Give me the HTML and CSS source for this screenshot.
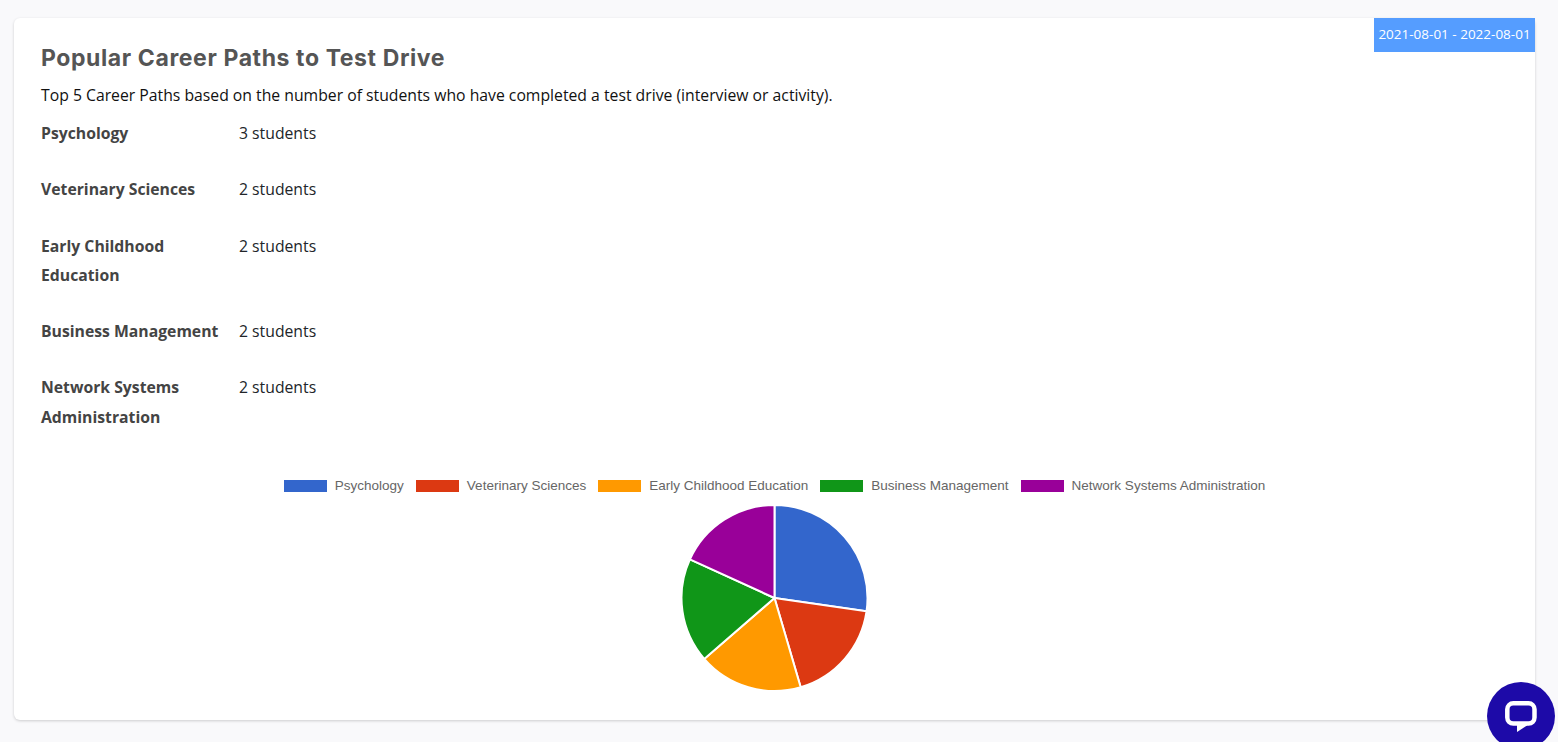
FILE: index.html
```html
<!DOCTYPE html>
<html lang="en">
  <head>
    <meta charset="UTF-8" />
    <title>Popular Career Paths</title>
    <link rel="stylesheet" href="styles.css">
  </head>
  <body>
    <main class="card">
      <div class="date-chip">2021-08-01 - 2022-08-01</div>
      <h2 class="card-title">Popular Career Paths to Test Drive</h2>
      <p class="card-desc">Top 5 Career Paths based on the number of students who have completed a test drive (interview or activity).</p>
      <div class="paths">
        <div class="path-name">Psychology</div>
        <div class="path-count">3 students</div>
        <div class="path-name">Veterinary Sciences</div>
        <div class="path-count">2 students</div>
        <div class="path-name">Early Childhood Education</div>
        <div class="path-count">2 students</div>
        <div class="path-name">Business Management</div>
        <div class="path-count">2 students</div>
        <div class="path-name">Network Systems Administration</div>
        <div class="path-count">2 students</div>
      </div>
      <div class="chart">
        <ul class="legend">
          <li class="legend-item"><span class="swatch blue"></span>Psychology</li>
          <li class="legend-item"><span class="swatch red"></span>Veterinary Sciences</li>
          <li class="legend-item"><span class="swatch orange"></span>Early Childhood Education</li>
          <li class="legend-item"><span class="swatch green"></span>Business Management</li>
          <li class="legend-item"><span class="swatch purple"></span>Network Systems Administration</li>
        </ul>
        <svg class="pie" width="190" height="190" viewBox="-94.5 -95 190 190">
          <path fill="#3366cc" d="M0 0L0 -93A93 93 0 0 1 92.06 13.23Z" />
          <path fill="#dc3912" d="M0 0L92.06 13.23A93 93 0 0 1 26.2 89.23Z" />
          <path fill="#ff9900" d="M0 0L26.2 89.23A93 93 0 0 1 -70.28 60.9Z" />
          <path fill="#109618" d="M0 0L-70.28 60.9A93 93 0 0 1 -84.6 -38.63Z" />
          <path fill="#990099" d="M0 0L-84.6 -38.63A93 93 0 0 1 0 -93Z" />
        </svg>
      </div>
    </main>
    <a class="chat-btn" href="#">
      <svg width="34" height="34" viewBox="0 0 34 34">
        <rect x="3.3" y="4.300" width="27.200" height="20.300" rx="6" fill="none" stroke="#fff" stroke-width="4.500" />
        <path fill="#fff" d="M13 25V33L23 26.500V25Z" />
      </svg>
    </a>
  </body>
</html>
```

FILE: styles.css
```css
* {
  margin: 0;
  padding: 0;
  box-sizing: border-box;
}

body {
  height: 742px;
  overflow: hidden;
  padding: 18px 23px 22px 14px;
  background-color: #f9f9fb;
  font-family: "Open Sans", sans-serif;
  font-size: 15.75px;
  color: #212529;
}

.card {
  position: relative;
  height: 702px;
  padding: 25px 27px 0;
  background-color: #fff;
  border-radius: 6px;
  box-shadow: 0 1px 3px rgba(0, 0, 0, 0.18);
}

.date-chip {
  position: absolute;
  top: 0;
  right: 0;
  width: 161px;
  height: 34px;
  background-color: #559dff;
  color: #fff;
  font-size: 13.5px;
  line-height: 32px;
  text-align: center;
}

.card-title {
  font-family: Inter, sans-serif;
  font-size: 23px;
  font-weight: 700;
  line-height: 30px;
  letter-spacing: 0.6px;
  color: #555;
}

.card-desc {
  margin-top: 10px;
  line-height: 24px;
  color: #111;
}

.paths {
  display: grid;
  grid-template-columns: 198px 1fr;
  row-gap: 27px;
  margin-top: 12px;
  line-height: 29.25px;
}

.path-name {
  padding-right: 16px;
  font-weight: 700;
  color: #444;
}

.chart {
  display: flex;
  flex-direction: column;
  align-items: center;
  margin-top: 45.75px;
}

.legend {
  display: flex;
  gap: 12px;
  list-style: none;
  font-family: "Liberation Sans", Arial, sans-serif;
  font-size: 13.5px;
  line-height: 16px;
  color: #666;
}

.legend-item {
  display: flex;
  align-items: center;
}

.swatch {
  width: 43px;
  height: 12px;
  margin-right: 8px;
}

.blue { background-color: #3366cc; }
.red { background-color: #dc3912; }
.orange { background-color: #ff9900; }
.green { background-color: #109618; }
.purple { background-color: #990099; }

.pie {
  display: block;
  margin-top: 9px;
}

.pie path {
  stroke: #fff;
  stroke-width: 2;
}

.chat-btn {
  position: fixed;
  left: 1487px;
  top: 682px;
  display: flex;
  justify-content: center;
  align-items: center;
  width: 68px;
  height: 68px;
  border-radius: 50%;
  background-color: #1d0aa8;
}
```
